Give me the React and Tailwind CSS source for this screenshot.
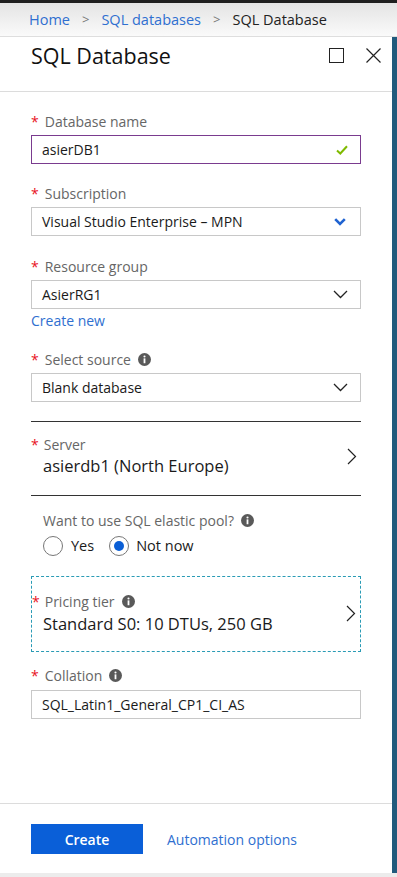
import React from "react"

const font = { fontFamily: '"Open Sans", "Noto Sans", sans-serif' }

function Info() {
  return (
    <svg width="13" height="13" viewBox="0 0 16 16" className="ml-[7px] inline-block">
      <circle cx="8" cy="8" r="8" fill="#595959" />
      <circle cx="8" cy="4.3" r="1.3" fill="#fff" />
      <rect x="6.9" y="6.6" width="2.2" height="6" fill="#fff" />
    </svg>
  )
}

function ChevronDown() {
  return (
    <svg width="15" height="9" viewBox="0 0 15 9" fill="none">
      <path d="M1 1l6.5 6.5L14 1" stroke="#222" strokeWidth="1.3" />
    </svg>
  )
}

function ChevronRight() {
  return (
    <svg width="10" height="17" viewBox="0 0 10 17" fill="none">
      <path d="M1 1l7.5 7.5L1 16" stroke="#222" strokeWidth="1.2" />
    </svg>
  )
}

function Label({ children, info, className = "" }) {
  return (
    <div className={`flex h-5 items-center text-[14px] text-[#666] ${className}`}>
      <span className="mr-[6px] text-[#e81123]">*</span>
      <span>{children}</span>
      {info && <Info />}
    </div>
  )
}

function Box({ children, right, border = "border-[#c8c8c8]" }) {
  return (
    <div className={`mt-[4px] flex h-[29px] items-center justify-between border ${border} pl-[10px] pr-[12px] text-[14px] text-[#1a1a1a]`}>
      <span>{children}</span>
      {right}
    </div>
  )
}

export default function App() {
  return (
    <div className="flex h-[877px] w-[397px] flex-col overflow-hidden bg-white" style={font}>
      <div className="h-[3px] bg-[#1f1f1f]" />
      {/* breadcrumb */}
      <div className="flex h-[33px] items-center gap-[12px] bg-gradient-to-b from-[#e4e4e4] to-[#fafafa] pl-[29px] text-[14.5px]">
        <span className="text-[#2f6fd0]">Home</span>
        <span className="text-[13px] text-[#777]">{">"}</span>
        <span className="text-[#2f6fd0]">SQL databases</span>
        <span className="text-[13px] text-[#777]">{">"}</span>
        <span className="text-[#222]">SQL Database</span>
      </div>

      <div className="flex flex-1 border-t border-[#dedede]">
        <div className="flex flex-1 flex-col">
          {/* header */}
          <div className="flex h-[55px] items-start justify-between border-b border-[#dcdcdc] pl-[31px] pr-[11px] pt-[3px]">
            <h1 className="text-[21.5px] text-[#111]">SQL Database</h1>
            <div className="mt-[8px] flex items-center gap-[22px]">
              <div className="h-[15px] w-[15px] border border-[#222]" />
              <svg width="15" height="15" viewBox="0 0 15 15">
                <path d="M0.5 0.5l14 14M14.5 0.5l-14 14" stroke="#222" strokeWidth="1.2" />
              </svg>
            </div>
          </div>

          {/* form */}
          <div className="flex flex-1 flex-col px-[31px] pt-[19px]">
            <Label>Database name</Label>
            <Box
              border="border-[#7a3b8f]"
              right={
                <svg width="12" height="10" viewBox="0 0 12 10" fill="none">
                  <path d="M1 5.5l3.3 3L11 1.2" stroke="#7fba00" strokeWidth="2" />
                </svg>
              }
            >
              asierDB1
            </Box>

            <Label className="mt-[19px]">Subscription</Label>
            <Box
              right={
                <svg width="12" height="8" viewBox="0 0 12 8" fill="none" className="mr-[2px]">
                  <path d="M1.2 1.2L6 6l4.8-4.8" stroke="#1f63d1" strokeWidth="2.6" />
                </svg>
              }
            >
              Visual Studio Enterprise – MPN
            </Box>

            <Label className="mt-[20px]">Resource group</Label>
            <Box right={<ChevronDown />}>AsierRG1</Box>
            <div className="mt-[2px] h-5 text-[14px] leading-5 text-[#2f6fd0]">Create new</div>

            <Label className="mt-[18px]" info>Select source</Label>
            <Box right={<ChevronDown />}>Blank database</Box>

            {/* server */}
            <div className="mt-[19px] flex items-center justify-between border-y border-[#333] pb-[17px] pr-[4px] pt-[12px]">
              <div>
                <div className="flex h-5 items-center text-[14px] text-[#666]">
                  <span className="mr-[5px] text-[#e81123]">*</span>Server
                </div>
                <div className="pl-[12px] text-[16.5px] leading-[24px] text-[#1a1a1a]">asierdb1 (North Europe)</div>
              </div>
              <ChevronRight />
            </div>

            {/* elastic pool */}
            <div className="pl-[12px] pt-[14px]">
              <div className="flex h-5 items-center text-[14px] text-[#666]">
                Want to use SQL elastic pool?
                <Info />
              </div>
              <div className="mt-[5px] flex items-center text-[14.5px] text-[#1a1a1a]">
                <span className="h-[20px] w-[20px] rounded-full border border-[#777]" />
                <span className="ml-[8px]">Yes</span>
                <span className="ml-[15px] flex h-[20px] w-[20px] items-center justify-center rounded-full border border-[#777]">
                  <span className="h-[10px] w-[10px] rounded-full bg-[#0b5fd6]" />
                </span>
                <span className="ml-[7px]">Not now</span>
              </div>
            </div>

            {/* pricing tier */}
            <div className="mt-[19px] flex h-[76px] items-center justify-between border border-dashed border-[#2a9bb5] pr-[4px]">
              <div>
                <div className="flex h-5 items-center text-[14px] text-[#666]">
                  <span className="mr-[5px] text-[#e81123]">*</span>Pricing tier
                  <Info />
                </div>
                <div className="pl-[11px] text-[16.5px] leading-[24px] text-[#1a1a1a]">Standard S0: 10 DTUs, 250 GB</div>
              </div>
              <ChevronRight />
            </div>

            <Label className="mt-[14px]" info>Collation</Label>
            <Box>SQL_Latin1_General_CP1_CI_AS</Box>
          </div>

          {/* footer */}
          <div className="flex h-[70px] items-start gap-[24px] border-t border-[#dcdcdc] px-[31px] pt-[20px]">
            <button className="h-[30px] w-[112px] bg-[#0a5fd8] text-[14px] font-semibold text-white">Create</button>
            <span className="mt-[5px] text-[14px] text-[#2f6fd0]">Automation options</span>
          </div>
        </div>
        <div className="w-[5px] bg-[#215a7c]" />
      </div>
      <div className="h-[4px] bg-[#ececec]" />
    </div>
  )
}
